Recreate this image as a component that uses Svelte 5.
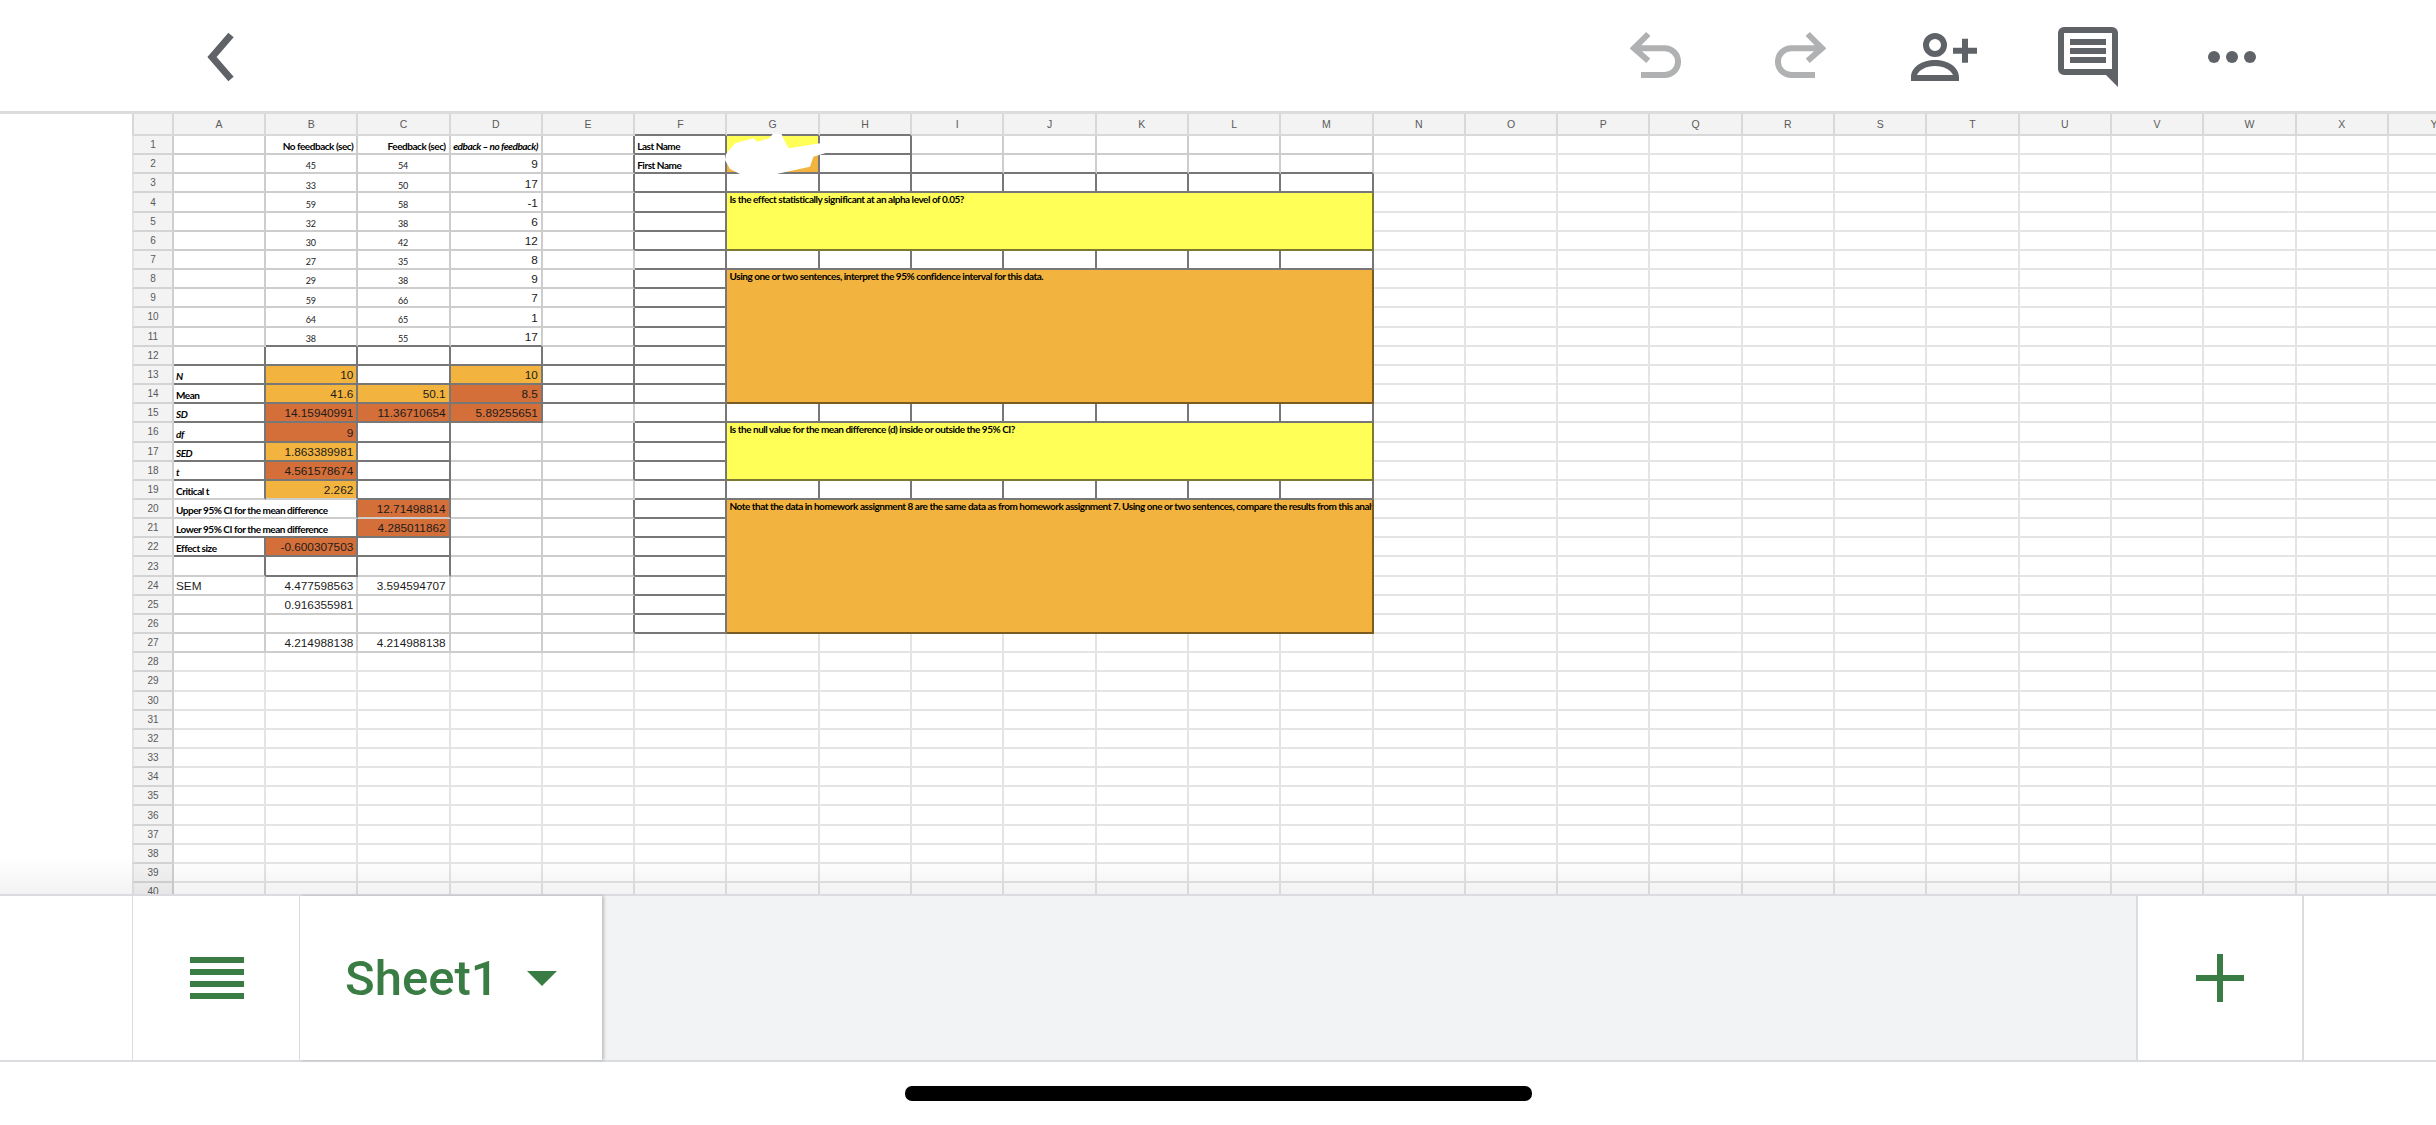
<script>
  const letters = 'ABCDEFGHIJKLMNOPQRSTUVWXYZ'.slice(0, 25).split('');
  const A=0,B=1,C=2,D=3,E=4,F=5,G=6,H=7,M=12;

  const content = {
    '1,1': ['No feedback (sec)', 'lab right'],
    '1,2': ['Feedback (sec)', 'lab right'],
    '1,3': ['edback – no feedback)', 'lab it right clip'],
    '1,5': ['Last Name', 'lab'],
    '2,5': ['First Name', 'lab'],
    '13,0': ['N', 'lab it'],
    '14,0': ['Mean', 'lab'],
    '15,0': ['SD', 'lab it'],
    '16,0': ['df', 'lab it'],
    '17,0': ['SED', 'lab it'],
    '18,0': ['t', 'lab it'],
    '19,0': ['Critical t', 'lab'],
    '20,0': ['Upper 95% CI for the mean difference', 'lab'],
    '21,0': ['Lower 95% CI for the mean difference', 'lab'],
    '22,0': ['Effect size', 'lab'],
    '24,0': ['SEM', 'num left'],
    '4,6': ['Is the effect statistically significant at an alpha level of 0.05?', 'lab tl'],
    '8,6': ['Using one or two sentences, interpret the 95% confidence interval for this data.', 'lab tl'],
    '16,6': ['Is the null value for the mean difference (d) inside or outside the 95% CI?', 'lab tl'],
    '20,6': ['Note that the data in homework assignment 8 are the same data as from homework assignment 7. Using one or two sentences, compare the results from this analy', 'lab tl cliptext']
  };
  const small = [[45,54,9],[33,50,17],[59,58,-1],[32,38,6],[30,42,12],[27,35,8],[29,38,9],[59,66,7],[64,65,1],[38,55,17]];
  small.forEach((v, i) => {
    content[`${i+2},1`] = [String(v[0]), 'sm'];
    content[`${i+2},2`] = [String(v[1]), 'sm'];
    content[`${i+2},3`] = [String(v[2]), 'num'];
  });
  const nums = {
    '13,1':'10','13,3':'10','14,1':'41.6','14,2':'50.1','14,3':'8.5',
    '15,1':'14.15940991','15,2':'11.36710654','15,3':'5.89255651','16,1':'9',
    '17,1':'1.863389981','18,1':'4.561578674','19,1':'2.262','20,2':'12.71498814',
    '21,2':'4.285011862','22,1':'-0.600307503','24,1':'4.477598563','24,2':'3.594594707',
    '25,1':'0.916355981','27,1':'4.214988138','27,2':'4.214988138'
  };
  for (const k in nums) content[k] = [nums[k], 'num'];

  const orange = ['13,1','13,3','14,1','14,2','17,1','19,1'];
  const rust = ['14,3','15,1','15,2','15,3','16,1','18,1','20,2','21,2','22,1'];

  const merges = {
    '4,6': [7,3,'yellow'], '8,6': [7,7,'amber'], '16,6': [7,3,'yellow'], '20,6': [7,7,'amber'],
    '20,0': [2,1,''], '21,0': [2,1,'']
  };
  const covered = new Set();
  for (const k in merges) {
    const [r,c] = k.split(',').map(Number);
    const [cs,rs] = merges[k];
    for (let i=r;i<r+rs;i++) for (let j=c;j<c+cs;j++) if (i!==r||j!==c) covered.add(`${i},${j}`);
  }

  const fullRows = [2,3,6,7,14,15,18,19,26];
  const gridRows = [3,7,15,19];

  function darkBottom(r,c){
    if (c===F && r>=1 && r<=26) return true;
    if (c>=G && c<=M && fullRows.includes(r)) return true;
    if ((c===G||c===H) && r===1) return true;
    if (r===11 && c>=B && c<=D) return true;
    if ((r===12||r===13||r===14) && c>=A && c<=E) return true;
    if (r===15 && c<=D) return true;
    if (r>=16 && r<=18 && c<=C) return true;
    if (r===19 && c===C) return true;
    if ((r===21||r===22) && c<=C) return true;
    if (r===23 && c===B) return true;
    return false;
  }
  function darkRight(r,c){
    if (c===E) return (r>=1&&r<=6)||(r>=8&&r<=14)||(r>=16&&r<=18)||(r>=20&&r<=26);
    if (c===F) return r>=1&&r<=26;
    if ((c===G||c===H) && r<=2 && r>=1) return true;
    if (c>=G && c<=M && gridRows.includes(r)) return true;
    if (c===A) return (r>=12&&r<=19)||r===22||r===23;
    if (c===B) return r>=12&&r<=23;
    if (c===C) return r>=12&&r<=23;
    if (c===D) return r>=12&&r<=15;
    return false;
  }

  const cells = [];
  for (let r=1;r<=40;r++) {
    for (let c=0;c<25;c++) {
      const k = `${r},${c}`;
      if (covered.has(k)) continue;
      const m = merges[k];
      const t = content[k];
      const cl = ['cell'];
      const near = (c<=E && r<=27) || (c>=F && c<=M && r<=2);
      if (near) cl.push('near');
      const endC = m ? c+m[0]-1 : c;
      const endR = m ? r+m[1]-1 : r;
      if (darkBottom(endR,c)) cl.push('db');
      if (darkRight(r,endC)) cl.push('dr');
      if (orange.includes(k)) cl.push('amber');
      if (rust.includes(k)) cl.push('rust');
      if (k==='1,6') cl.push('yellow');
      if (k==='2,6') cl.push('amber');
      if (m && m[2]) cl.push(m[2], 'box');
      if (t) cl.push(t[1]);
      cells.push({
        id:k, text:t?t[0]:'', cls:cl.join(' '),
        span: m ? `grid-column:span ${m[0]};grid-row:span ${m[1]}` : null
      });
    }
  }
  const rows = Array.from({length:40},(_,i)=>i+1);
  const byRow = rows.map(r => cells.filter(x => x.id.startsWith(r+',')));
</script>

<div class="page">
  <header class="top">
    <svg class="back" viewBox="0 0 35 54" width="35" height="54"><path d="M26 5 L7 27 L26 49" fill="none" stroke="#5f6368" stroke-width="7"/></svg>
    <svg class="undo" viewBox="0 0 54 50" width="54" height="50"><path d="M18.3 4 L4 18.3 L18.3 30.7 M6 18.3 H34.7 A13.3 13.3 0 0 1 34.7 45 H11" fill="none" stroke="#b0b1b2" stroke-width="6"/></svg>
    <svg class="redo" viewBox="0 0 54 50" width="54" height="50"><path d="M35.7 4 L50 18.3 L35.7 30.7 M48 18.3 H19.3 A13.3 13.3 0 0 0 19.3 45 H43" fill="none" stroke="#b0b1b2" stroke-width="6"/></svg>
    <svg class="person" viewBox="0 0 72 54" width="72" height="54">
      <circle cx="27" cy="15" r="9" fill="none" stroke="#5f6368" stroke-width="6"/>
      <path fill="#5f6368" fill-rule="evenodd" d="M3 51 V47 C3 37 14 30 27 30 C40 30 51 37 51 47 V51 Z M9 45 H45 C43 40 36 36 27 36 C18 36 11 40 9 45 Z"/>
      <path fill="#5f6368" d="M45 17.7 H54 V8.7 H60 V17.7 H69 V23.7 H60 V32.7 H54 V23.7 H45 Z"/>
    </svg>
    <svg class="comment" viewBox="0 0 60 62" width="60" height="62">
      <path fill="#5f6368" fill-rule="evenodd" d="M6 0 H54 A6 6 0 0 1 60 6 V60 L48 48 H6 A6 6 0 0 1 0 42 V6 A6 6 0 0 1 6 0 Z M6 6 V42 H54 V6 Z"/>
      <path fill="#5f6368" d="M12 12 H48 V18 H12 Z M12 21 H48 V27 H12 Z M12 30 H48 V36 H12 Z"/>
    </svg>
    <svg class="dots" viewBox="0 0 56 14" width="56" height="14" fill="#5f6368"><circle cx="10" cy="7" r="6"/><circle cx="28" cy="7" r="6"/><circle cx="46" cy="7" r="6"/></svg>
  </header>

  <section class="sheet">
    <div class="grid">
      <div class="head corner"></div>
      {#each letters as l, i}
        <div class="head" class:dh={i>=F && i<=H}>{l}</div>
      {/each}
      {#each rows as r, i}
        <div class="rowhead">{r}</div>
        {#each byRow[i] as cell (cell.id)}
          <div class={cell.cls} style={cell.span}>{#if cell.text}<span>{cell.text}</span>{/if}</div>
        {/each}
      {/each}
    </div>
    <svg class="blot" viewBox="0 0 420 180" width="140" height="60"><path fill="#fff" d="M48 88 L75 55 L130 40 L142 50 L178 40 L190 25 L215 28 L225 50 L236 70 L330 55 L348 60 L345 85 L310 95 L300 125 L200 147 L90 147 L60 132 L45 105 Z"/></svg>
    <div class="fade"></div>
  </section>

  <footer class="bar">
    <div class="menu">
      <svg viewBox="0 0 54 42" width="54" height="42" fill="#3a7d44"><rect width="54" height="6"/><rect y="12" width="54" height="6"/><rect y="24" width="54" height="6"/><rect y="36" width="54" height="6"/></svg>
    </div>
    <div class="tab">
      <span class="name">Sheet1</span>
      <svg viewBox="0 0 30 15" width="30" height="15"><path d="M0 0 H30 L15 15 Z" fill="#3a7d44"/></svg>
    </div>
    <div class="rest"></div>
    <div class="add">
      <svg viewBox="0 0 48 48" width="48" height="48"><path fill="#3a7d44" d="M21 0 H27 V21 H48 V27 H27 V48 H21 V27 H0 V21 H21 Z"/></svg>
    </div>
  </footer>

  <div class="home"><div class="pill"></div></div>
</div>

<style>
  :global(body) { margin: 0; background: #fff; }
  .page { width: 2436px; height: 1125px; display: flex; flex-direction: column; overflow: hidden; background: #fff; }

  .top { height: 111px; display: flex; align-items: flex-start; flex: none; }
  .top svg { display: block; flex: none; }
  .back { margin: 30px 0 0 205px; }
  .undo { margin: 30px 0 0 1390px; }
  .redo { margin: 30px 0 0 88px; }
  .person { margin: 30px 0 0 82px; }
  .comment { margin: 26.7px 0 0 78px; }
  .dots { margin: 49.7px 0 0 86px; }

  .sheet { position: relative; height: 783px; flex: none; overflow: hidden; border-top: 3px solid #dcdcdc; box-sizing: border-box; }
  .grid {
    display: grid;
    margin-left: 132px;
    grid-template-columns: 42px 92px repeat(24, 92.3px);
    grid-template-rows: 22px repeat(40, 19.17px);
    width: max-content;
  }
  .head, .rowhead {
    box-sizing: border-box;
    background: #f3f3f3;
    border-right: 2px solid #d8d8d8;
    border-bottom: 2px solid #d8d8d8;
    color: #5a5a5a;
    font: 10.5px "Liberation Sans", sans-serif;
    display: flex; align-items: center; justify-content: center;
    overflow: hidden;
  }
  .corner { border-left: 2px solid #d8d8d8; }
  .rowhead { border-left: 2px solid #e4e4e4; border-right-color: #cfcfcf; border-bottom-color: #d4d4d4; font-size: 10px; }
  .dh { border-bottom-color: #777; }

  .cell {
    box-sizing: border-box;
    border-right: 2px solid #e4e4e4;
    border-bottom: 2px solid #e4e4e4;
    display: flex; align-items: flex-end; justify-content: flex-start;
    white-space: nowrap;
    min-width: 0; min-height: 0;
    color: #000;
    padding: 0 3px 1px 2px;
    font: 700 10px/1.1 Lato, sans-serif;
    letter-spacing: -0.47px;
  }
  .near { border-right-color: #cdcdcd; border-bottom-color: #cdcdcd; }
  .db { border-bottom-color: #777; }
  .dr { border-right-color: #777; }
  .amber { background: #f2b43f; }
  .rust { background: #d46f39; }
  .yellow { background: #ffff57; }
  .box.yellow { border-color: #7b7a30; }
  .box.amber { border-color: #7a5c22; }
  .lab { padding-bottom: 1px; }
  .right { justify-content: flex-end; }
  .it { font-style: italic; }
  .clip { overflow: hidden; }
  .tl { align-items: flex-start; padding-top: 1px; }
  .cliptext { overflow: hidden; }
  .sm { justify-content: center; font: 400 9px/1.1 Lato, sans-serif; letter-spacing: -0.2px; color: #222; padding-bottom: 1px; }
  .num { justify-content: flex-end; font: 400 11.8px/1.1 "Liberation Sans", sans-serif; letter-spacing: 0; color: #1c1c1c; padding-bottom: 1px; }
  .left { justify-content: flex-start; }

  .blot { position: absolute; left: 710px; top: 11px; }
  .fade { position: absolute; left: 0; right: 0; bottom: 0; height: 36px; background: linear-gradient(to bottom, rgba(0,0,0,0), rgba(0,0,0,0.05)); pointer-events: none; }

  .bar { height: 168px; flex: none; display: flex; box-sizing: border-box; border-top: 2px solid #dadce0; border-bottom: 2px solid #dadce0; padding-left: 132px; }
  .menu { width: 168px; box-sizing: border-box; border-left: 1px solid #dadce0; border-right: 1px solid #dadce0; display: flex; align-items: center; justify-content: center; padding-left: 2px; }
  .tab { width: 302px; box-sizing: border-box; display: flex; align-items: center; padding-left: 45px; box-shadow: 2px 0 3px rgba(0,0,0,0.22); position: relative; }
  .name { font: 500 49px/1 Roboto, sans-serif; color: #3a7d44; width: 182px; flex: none; }
  .rest { flex: 1; background: #f1f3f4; }
  .add { width: 168px; box-sizing: border-box; border-left: 2px solid #dadce0; border-right: 2px solid #dadce0; display: flex; align-items: center; justify-content: center; }
  .bar::after { content: ""; width: 132px; flex: none; }

  .home { flex: 1; display: flex; justify-content: center; padding-top: 24px; }
  .pill { width: 627px; height: 15px; background: #000; border-radius: 7px; }
</style>
